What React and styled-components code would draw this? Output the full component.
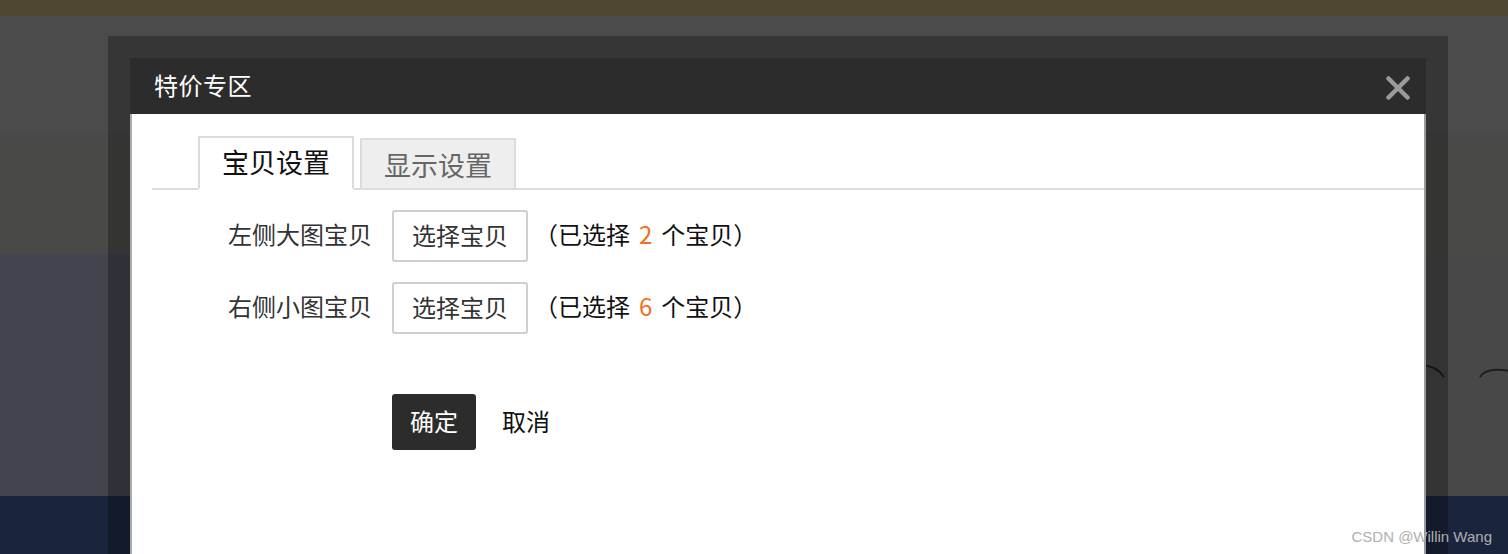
import React from 'react'
import styled, { createGlobalStyle } from 'styled-components'

const GlobalStyle = createGlobalStyle`
    html, body {
        margin: 0;
        padding: 0;
    }
    body {
        width: 1508px;
        height: 554px;
        overflow: hidden;
        font-family: "Noto Sans CJK SC", "Noto Sans", sans-serif;
    }
`;

const Page = styled.div`
    position: relative;
    width: 1508px;
    height: 554px;
    display: flex;
    flex-direction: column;
    overflow: hidden;
`;

const Band = styled.div`
    height: ${p => p.h}px;
    flex-shrink: 0;
    background: ${p => p.bg};
    display: flex;
    justify-content: flex-end;
    align-items: flex-start;
`;

const Overlay = styled.div`
    position: absolute;
    left: 108px;
    top: 36px;
    width: 1340px;
    bottom: 0;
    box-sizing: border-box;
    padding: 22px 22px 0;
    background: rgba(0, 0, 0, 0.28);
    display: flex;
`;

const Modal = styled.div`
    flex: 1;
    display: flex;
    flex-direction: column;
`;

const Header = styled.div`
    height: 56px;
    box-sizing: border-box;
    background: #2c2c2c;
    display: flex;
    align-items: center;
    justify-content: space-between;
    padding: 0 16px 4px 24px;
    color: #fff;
    font-size: 24px;
    letter-spacing: 0.5px;
`;

const Close = styled.button`
    width: 24px;
    height: 24px;
    margin-top: 8px;
    padding: 0;
    border: 0;
    background: none;
    display: flex;
`;

const Body = styled.div`
    flex: 1;
    background: #fff;
    border-left: 2px solid #ababab;
    border-right: 2px solid #9a9a9a;
    padding: 22px 0 0 20px;
`;

const TabBar = styled.div`
    display: flex;
    align-items: flex-end;
    padding-left: 46px;
    border-bottom: 2px solid #dcdcdc;
    height: 52px;
`;

const Tab = styled.div`
    width: 156px;
    box-sizing: border-box;
    height: ${p => (p.active ? 54 : 50)}px;
    margin-bottom: ${p => (p.active ? -2 : 0)}px;
    margin-right: 6px;
    border: 2px solid #dcdcdc;
    border-bottom: ${p => (p.active ? '2px solid #fff' : '0')};
    background: ${p => (p.active ? '#fff' : '#eee')};
    color: ${p => (p.active ? '#111' : '#666')};
    font-size: 27px;
    display: flex;
    align-items: center;
    justify-content: center;
    padding-bottom: ${p => (p.active ? 4 : 0)}px;
`;

const Form = styled.div`
    padding-top: 20px;
    display: flex;
    flex-direction: column;
    gap: 20px;
`;

const Row = styled.div`
    display: flex;
    align-items: center;
    height: 52px;
`;

const Label = styled.div`
    width: 220px;
    text-align: right;
    font-size: 24px;
    color: #333;
    padding-bottom: 5px;
`;

const PickButton = styled.button`
    margin-left: 20px;
    width: 136px;
    height: 52px;
    box-sizing: border-box;
    border: 2px solid #cfcfcf;
    border-radius: 3px;
    background: #fff;
    font-family: inherit;
    font-size: 24px;
    color: #333;
    padding: 0 0 4px;
`;

const Count = styled.div`
    margin-left: 6px;
    font-size: 24px;
    color: #111;
    padding-bottom: 5px;
`;

const Num = styled.span`
    color: #f07022;
    margin: 0 9px;
`;

const Actions = styled.div`
    display: flex;
    align-items: center;
    margin-top: 60px;
    padding-left: 240px;
`;

const Confirm = styled.button`
    width: 84px;
    height: 56px;
    border: 0;
    border-radius: 3px;
    background: #2c2c2c;
    color: #fff;
    font-family: inherit;
    font-size: 24px;
    padding: 0 0 4px;
`;

const Cancel = styled.button`
    margin-left: 26px;
    border: 0;
    background: none;
    padding: 0 0 4px;
    font-family: inherit;
    font-size: 24px;
    color: #111;
`;

const Watermark = styled.div`
    position: absolute;
    right: 16px;
    bottom: 9px;
    font-family: "Liberation Sans", Arial, sans-serif;
    font-size: 15px;
    color: #b0b0b0;
`;

const Curves = () => (
    <svg width="90" height="140" viewBox="0 0 90 140">
        <path d="M-2 112 C10 110 20 114 26 123" stroke="#1e1e1e" strokeWidth="2" fill="none" />
        <path d="M62 123 C66 116 76 114 92 117" stroke="#1e1e1e" strokeWidth="2" fill="none" />
    </svg>
);

const CloseIcon = () => (
    <svg width="24" height="24" viewBox="0 0 24 24">
        <path d="M2.5 2.5 L21.5 21.5 M21.5 2.5 L2.5 21.5" stroke="#9b9b9b" strokeWidth="4.5" strokeLinecap="round" />
    </svg>
);

const rows = [
    { label: '左侧大图宝贝', count: 2 },
    { label: '右侧小图宝贝', count: 6 },
];

const App = () => {
    return (
        <Page>
            <GlobalStyle />
            <Band h={16} bg="#4d4730" />
            <Band h={118} bg="#4b4b4b" />
            <Band h={120} bg="#494a47" />
            <Band h={242} bg="linear-gradient(to right, #42454e 0%, #44464c 60%, #484848 100%)">
                <Curves />
            </Band>
            <Band h={58} bg="#1a253d" />

            <Overlay>
                <Modal>
                    <Header>
                        <span>特价专区</span>
                        <Close><CloseIcon /></Close>
                    </Header>
                    <Body>
                        <TabBar>
                            <Tab active>宝贝设置</Tab>
                            <Tab>显示设置</Tab>
                        </TabBar>
                        <Form>
                            {rows.map(r => (
                                <Row key={r.label}>
                                    <Label>{r.label}</Label>
                                    <PickButton>选择宝贝</PickButton>
                                    <Count>
                                        （已选择<Num>{r.count}</Num>个宝贝）
                                    </Count>
                                </Row>
                            ))}
                        </Form>
                        <Actions>
                            <Confirm>确定</Confirm>
                            <Cancel>取消</Cancel>
                        </Actions>
                    </Body>
                </Modal>
            </Overlay>
            <Watermark>CSDN @Willin Wang</Watermark>
        </Page>
    )
}

export default App
